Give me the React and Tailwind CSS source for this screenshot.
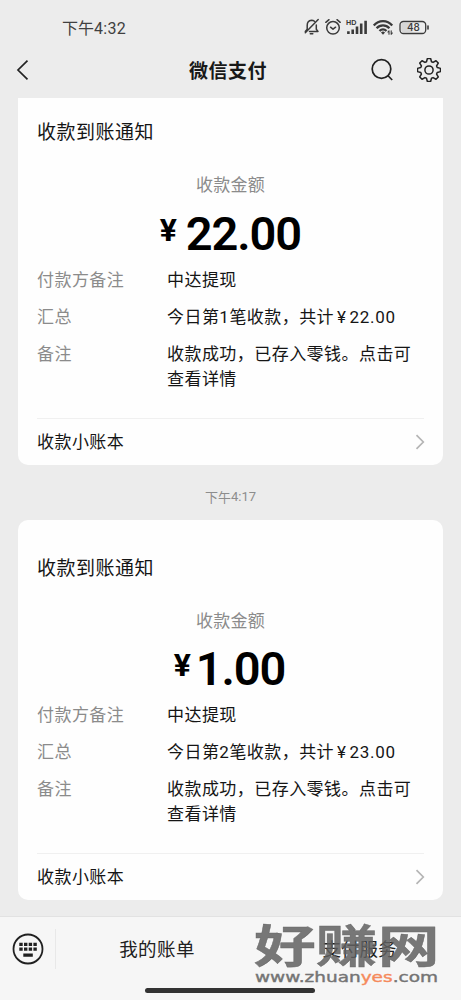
import React from "react";

function StatusIcons() {
  return (
    <svg width="128" height="20" viewBox="0 0 128 20" fill="none" stroke="#3a3a3a" strokeWidth="1.5" strokeLinecap="round" strokeLinejoin="round">
      {/* muted bell */}
      <path d="M4.2 12.2V8.5C4.2 5.4 6 3.5 8.5 3.3C9.7 3.3 10.6 3.6 11.4 4.3M13.3 8V12.2L15 14.4H6.5M2.3 14.4L4.2 12.2M15.2 2.6L2.3 15.8M7.3 16.8H9.8" />
      {/* alarm clock */}
      <circle cx="30" cy="10.8" r="6.3" />
      <path d="M22.8 5.3L26 2.7M37.2 5.3L34 2.7M27.5 10.2L30 12.2L32.6 10.2" />
      {/* signal */}
      <text x="43" y="7.8" fill="#3a3a3a" stroke="none" fontSize="7.2" fontWeight="700" fontFamily="Liberation Sans, sans-serif">HD</text>
      <path strokeWidth="2.6" strokeLinecap="butt" d="M45.4 14.3V17M49.7 12.6V17M54 9.6V17M58.2 6.6V17M62.6 3.8V17" />
      {/* wifi */}
      <path strokeWidth="2.3" strokeLinecap="butt" d="M70.8 8.4C75.7 2.6 84.3 2.6 89.2 8.4M73.6 11.2C77.1 7.3 82.9 7.3 86.4 11.2M76.5 14C78.6 11.8 81.4 11.8 83.5 14" />
      <path fill="#3a3a3a" stroke="none" d="M78 15.4Q80 13.8 82 15.4L80 17.7Z" />
      <path strokeWidth="1.1" d="M86 17.3V13.8L84.9 15M88.2 13.8V17.3L89.3 16" />
      {/* battery */}
      <rect x="97" y="4.5" width="25.7" height="12" rx="3.5" strokeWidth="1.3" />
      <rect x="98.3" y="5.8" width="11.5" height="9.4" rx="2" fill="#d6d6d6" stroke="none" />
      <path strokeWidth="1.6" d="M125 9.1V11.9" />
      <text x="104" y="14.1" fill="#3a3a3a" stroke="none" fontSize="10" fontFamily="Inter, sans-serif" fontWeight="500">48</text>
    </svg>
  );
}

function Gear() {
  const pts = [];
  for (let i = 0; i < 8; i++) {
    [[-17, 8.6], [-8, 11.6], [8, 11.6], [17, 8.6]].forEach(([a, r]) => {
      const t = ((i * 45 + a) * Math.PI) / 180;
      pts.push(`${(12 + r * Math.sin(t)).toFixed(2)},${(12 - r * Math.cos(t)).toFixed(2)}`);
    });
  }
  return (
    <svg width="24" height="24" viewBox="0 0 24 24" fill="none" stroke="#222" strokeWidth="1.5" strokeLinejoin="round">
      <polygon points={pts.join(" ")} />
      <circle cx="12" cy="12" r="4.1" />
    </svg>
  );
}

function Row({ label, tall, children }) {
  return (
    <div className={"flex text-[17px] leading-[25px] tracking-[0.45px] " + (tall ? "h-[50px]" : "h-[25px]")}>
      <div className="w-[130px] shrink-0 text-[#8b8b8b]">{label}</div>
      <div className="whitespace-nowrap text-[#151515]">{children}</div>
    </div>
  );
}

function Card({ amount, total, nth, first }) {
  return (
    <section className={"mx-[18px] flex shrink-0 flex-col bg-[#fefefe] px-[19px] " + (first ? "h-[367px] rounded-b-[10px] pt-[19px]" : "h-[380px] rounded-[10px] pt-[33px]")}>
      <h2 className="h-[28px] text-[19px] leading-[28px] tracking-[0.5px] text-[#151515]">收款到账通知</h2>
      <div className="mt-[26px] h-[25px] text-center text-[17px] leading-[25px] tracking-[0.3px] text-[#8b8b8b]">收款金额</div>
      <div className={"flex items-start justify-center font-['Roboto',sans-serif] text-black " + (first ? "h-[71px]" : "h-[70px]")}>
        <span className={"w-[17px] text-[32px] leading-[40px] font-bold " + (first ? "mt-[14px] mr-[9px]" : "mt-[13px] mr-[5px]")}>¥</span>
        <span className={"text-[47px] leading-[64px] font-semibold tracking-[-1.1px] " + (first ? "mt-[6px]" : "mt-[5px] mr-[2px]")}>{amount}</span>
      </div>
      <div className="flex flex-col gap-[12px]">
        <Row label="付款方备注">中达提现</Row>
        <Row label="汇总">
          今日第<span className="font-['Roboto',sans-serif]">{nth}</span>笔收款，共计<span className="mx-[3px] font-['Roboto',sans-serif]">¥</span>
          <span className="font-['Roboto',sans-serif] tracking-[0.7px]">{total}</span>
        </Row>
        <Row label="备注" tall>收款成功，已存入零钱。点击可<br />查看详情</Row>
      </div>
      <div className="mt-[28px] flex h-[47px] items-center justify-between border-t border-[#f0f0f0]">
        <span className="-mt-[2px] text-[17px] tracking-[0.45px] text-[#151515]">收款小账本</span>
        <svg className="-mt-px -mr-px" width="10" height="16" viewBox="0 0 10 16" fill="none" stroke="#b5b5b5" strokeWidth="1.7"><path d="M1.5 1.2L8.3 8L1.5 14.8" /></svg>
      </div>
    </section>
  );
}

export default function App() {
  return (
    <main className="relative flex h-[1000px] w-[461px] flex-col overflow-hidden bg-[#ececec] font-['Noto_Sans_CJK_SC',sans-serif]">
      <div className="flex h-[44px] shrink-0 items-start justify-between pt-[17px] pr-[30px] pl-[62px]">
        <span className="-mt-px text-[16px] leading-[22px] text-[#404040]">下午<span className="font-['Roboto',sans-serif] tracking-[0.3px]">4:32</span></span>
        <StatusIcons />
      </div>
      <header className="flex h-[52px] shrink-0 items-center pr-[20px] pl-[16px]">
        <svg width="14" height="22" viewBox="0 0 14 22" fill="none" stroke="#222" strokeWidth="1.7"><path d="M11.5 1.7L2 11L11.5 20.3" /></svg>
        <h1 className="-mt-px ml-[159px] flex-1 text-[19px] leading-[28px] font-bold tracking-[0.5px] text-[#181818]">微信支付</h1>
        <svg className="mr-[23px]" width="24" height="24" viewBox="0 0 24 24" fill="none" stroke="#222" strokeWidth="1.7"><circle cx="11.5" cy="11" r="9.3" /><path d="M17.8 17.5L22.2 22" /></svg>
        <Gear />
      </header>
      <div className="h-[2px] shrink-0" />
      <Card first amount="22.00" total="22.00" nth="1" />
      <time className="flex h-[55px] shrink-0 items-center justify-center pt-[9px] text-[13px] text-[#8d8d8d]">下午<span className="font-['Roboto',sans-serif]">4:17</span></time>
      <Card amount="1.00" total="23.00" nth="2" />
      <footer className="mt-[16px] flex h-[84px] shrink-0 flex-col border-t border-[#e2e2e2] bg-[#f6f6f6]">
        <div className="flex h-[64px] items-center">
          <svg className="ml-[12px] shrink-0" width="32" height="32" viewBox="0 0 32 32">
            <circle cx="16" cy="16" r="14.5" fill="none" stroke="#202020" strokeWidth="1.8" />
            <path stroke="#202020" strokeWidth="3.2" d="M7.3 11.4h3.4m1.3 0h3.4m1.3 0h3.4m1.3 0h3.4M7.3 16.2h3.4m1.3 0h3.4m1.3 0h3.4m1.3 0h3.4M11.3 22.2h9.5" />
          </svg>
          <div className="ml-[11px] h-[40px] w-px bg-[#e8e8e8]" />
          <span className="-mt-px w-[202px] text-center text-[18.5px] tracking-[0.4px] text-[#202020]">我的账单</span>
          <span className="-mt-px flex-1 text-center text-[18.5px] text-[#202020]">支付服务</span>
        </div>
        <div className="mt-[7px] ml-[145px] h-[5px] w-[170px] rounded-full bg-[#333]" />
      </footer>
      <div className="absolute top-[914px] left-[254px] h-[74px] w-[186px]">
        <div className="origin-top-left scale-x-[1.33] scale-y-[0.98] text-[46.5px] leading-[60px] font-bold whitespace-nowrap text-[#606060]/85 [-webkit-text-stroke:0.4px_rgb(96_96_96/0.85)]">好赚网</div>
        <div className="absolute top-[54px] left-[1px] origin-top-left scale-x-[1.32] font-['DejaVu_Sans',sans-serif] text-[14px] leading-[18px] whitespace-nowrap text-[#747474] [-webkit-text-stroke:0.4px_currentColor]">
          www.zhuan<span className="text-[#f58a5c]">yes</span>.com
        </div>
      </div>
    </main>
  );
}
